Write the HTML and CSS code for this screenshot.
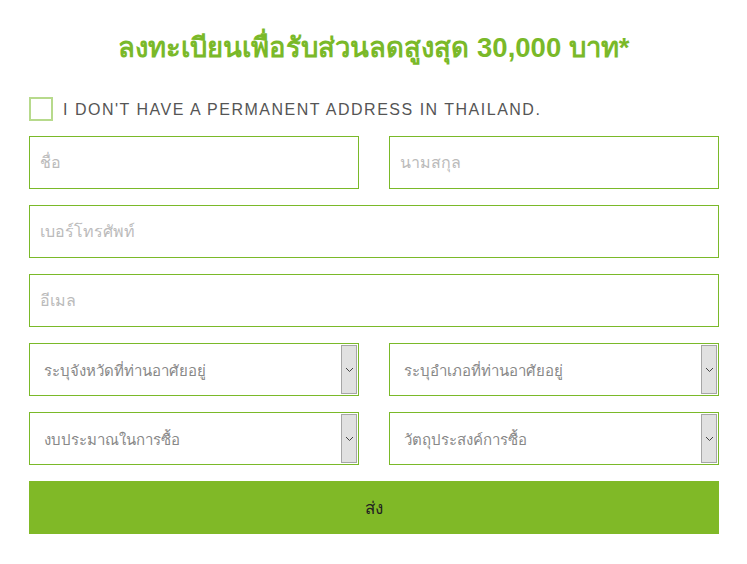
FILE: index.html
```html
<!DOCTYPE html>
<html lang="th">
<head>
  <meta charset="UTF-8" />
  <meta name="viewport" content="width=device-width, initial-scale=1.0" />
  <title>ลงทะเบียน</title>
  <link rel="stylesheet" href="styles.css">
</head>
<body>
  <div class="container">
    <h1>ลงทะเบียนเพื่อรับส่วนลดสูงสุด 30,000 บาท*</h1>

    <!-- ไม่มีที่อยู่ในไทย -->
    <label class="check-row">
      <span class="check-box"></span>
      <span class="check-text">I DON'T HAVE A PERMANENT ADDRESS IN THAILAND.</span>
    </label>

    <div class="row">
      <div class="field"><span class="placeholder">ชื่อ</span></div>
      <div class="field"><span class="placeholder">นามสกุล</span></div>
    </div>

    <div class="field"><span class="placeholder">เบอร์โทรศัพท์</span></div>
    <div class="field"><span class="placeholder">อีเมล</span></div>

    <div class="row">
      <div class="field select">
        <span class="value">ระบุจังหวัดที่ท่านอาศัยอยู่</span>
        <span class="arrow"><svg width="9" height="6" viewBox="0 0 9 6"><path d="M1 1 L4.5 4.5 L8 1" fill="none" stroke="#444" stroke-width="1"/></svg></span>
      </div>
      <div class="field select">
        <span class="value">ระบุอำเภอที่ท่านอาศัยอยู่</span>
        <span class="arrow"><svg width="9" height="6" viewBox="0 0 9 6"><path d="M1 1 L4.5 4.5 L8 1" fill="none" stroke="#444" stroke-width="1"/></svg></span>
      </div>
    </div>

    <div class="row">
      <div class="field select">
        <span class="value">งบประมาณในการซื้อ</span>
        <span class="arrow"><svg width="9" height="6" viewBox="0 0 9 6"><path d="M1 1 L4.5 4.5 L8 1" fill="none" stroke="#444" stroke-width="1"/></svg></span>
      </div>
      <div class="field select">
        <span class="value">วัตถุประสงค์การซื้อ</span>
        <span class="arrow"><svg width="9" height="6" viewBox="0 0 9 6"><path d="M1 1 L4.5 4.5 L8 1" fill="none" stroke="#444" stroke-width="1"/></svg></span>
      </div>
    </div>

    <button class="submit">ส่ง</button>
  </div>
</body>
</html>
```

FILE: styles.css
```css
body {
  margin: 0;
  padding: 0;
  font-family: "Liberation Sans", "Noto Sans", sans-serif;
  background: #fff;
}
.container {
  width: 690px;
  margin: 0 auto;
  padding: 30px 0 0 1px;
}
h1 {
  margin: 0 0 31px;
  text-align: center;
  font-size: 27.5px;
  line-height: 36px;
  font-weight: bold;
  color: #7ab929;
}
.check-row {
  display: flex;
  align-items: center;
  gap: 10px;
  height: 24px;
  margin-bottom: 15px;
}
.check-box {
  width: 20px;
  height: 20px;
  border: 2px solid #b7da8c;
}
.check-text {
  font-size: 16px;
  color: #555;
  letter-spacing: 1.5px;
  padding-top: 2px;
}
.row {
  display: grid;
  grid-template-columns: 1fr 1fr;
  gap: 30px;
}
.field {
  height: 53px;
  box-sizing: border-box;
  border: 1px solid #7ab929;
  margin-bottom: 16px;
  display: flex;
  align-items: center;
  padding-left: 10px;
  font-size: 16px;
}
.placeholder {
  color: #bbb;
}
.select {
  padding-left: 14px;
  align-items: stretch;
}
.select .value {
  flex: 1;
  display: flex;
  align-items: center;
  color: #888;
  font-size: 15px;
  padding-top: 3px;
}
.arrow {
  width: 16px;
  margin: 1px 1px 1px 0;
  box-sizing: border-box;
  background: #e1e1e1;
  border: 1px solid #a6a6a6;
  display: flex;
  align-items: center;
  justify-content: center;
}
.submit {
  display: block;
  width: 100%;
  height: 53px;
  border: none;
  background: #80b927;
  color: #222;
  font-family: inherit;
  font-size: 17px;
  cursor: pointer;
}
```
